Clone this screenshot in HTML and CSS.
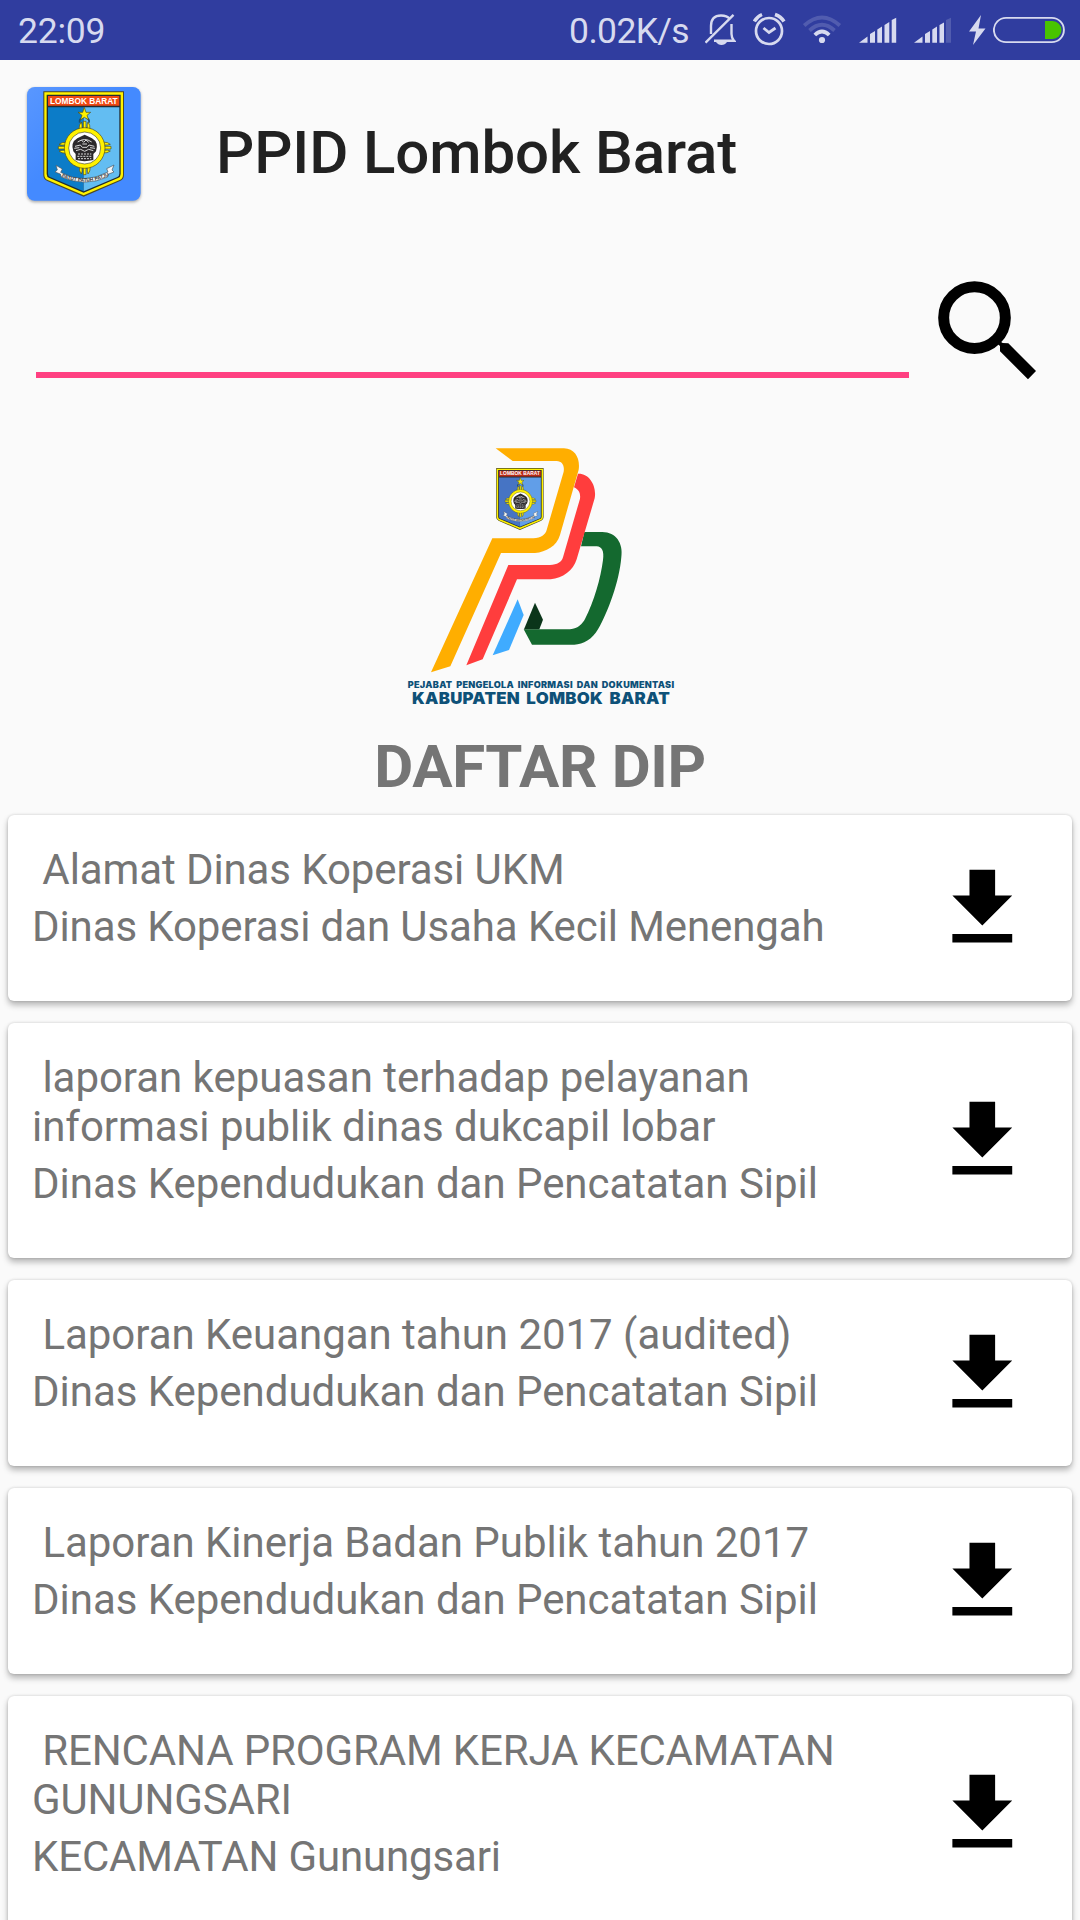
FILE: index.html
```html
<!DOCTYPE html>
<html lang="id">
<head>
<meta charset="utf-8">
<title>PPID Lombok Barat</title>
<link rel="stylesheet" href="styles.css">
</head>
<body>
<svg class="defs" width="0" height="0" aria-hidden="true">
  <symbol id="emblem" viewBox="70 32 243 320" overflow="visible">
    <path d="M70 34H312V285Q312 298 300 303L191 350L82 303Q70 298 70 285Z" fill="#4d4a22"/>
    <path d="M73 37H309V284Q309 296 299 300L191 346L83 300Q73 296 73 284Z" fill="#fff200"/>
    <path d="M80 44H302V282Q302 291 294 294L191 338L88 294Q80 291 80 282Z" fill="#222b30"/>
    <path class="emblem-dark" d="M84 82H191V334L90 291Q84 288 84 281Z"/>
    <path class="emblem-light" d="M191 82H298V281Q298 288 292 291L191 334Z"/>
    <path class="emblem-red" d="M84 48H298V77H84Z"/>
    <text class="emblem-name" x="90" y="71" textLength="203" lengthAdjust="spacingAndGlyphs">LOMBOK BARAT</text>
    <path d="M179 128Q177 116 187 114M207 128Q209 116 199 114" stroke="#174d78" stroke-width="5" fill="none"/>
    <g stroke="#4b481c" stroke-width="2" stroke-linejoin="round">
      <path d="M193 82L198 97H212L201 106L206 120L193 112L181 120L186 106L174 97H188Z" fill="#fff200"/>
      <g id="prongs" fill="#fff200">
        <path id="prong" d="M177 150Q177 132 184 126Q187 135 186 143H190V124H198V143H202Q200 135 204 126Q211 134 210 150L204 156H183Z"/>
        <use href="#prong" transform="rotate(90 194 203)"/>
        <use href="#prong" transform="rotate(180 194 204)"/>
        <use href="#prong" transform="rotate(-90 194 203)"/>
      </g>
      <circle cx="194" cy="204" r="61" fill="#fff200"/>
      <circle cx="194" cy="204" r="48" fill="#fff"/>
    </g>
    <path d="M160 214Q151 187 172 175L186 168L194 164L202 168L216 175Q237 187 228 214L220 222V240Q194 247 167 240V222Z" fill="#2b292b"/>
    <g fill="none" stroke="#d8d8d8" stroke-width="3">
      <path d="M173 186Q194 171 215 186M165 199L181 195L187 202H201L207 195L223 199M168 212L182 208L194 214L206 208L220 212M163 205L178 203M210 203L225 205"/>
      <path d="M174 222H214M172 229H216M174 236H214" stroke-dasharray="6 3"/>
      <path d="M184 180L191 187L198 180L206 187M187 192H201"/>
    </g>
    <path d="M108 256L127 267L122 277Q192 315 264 276L260 266L282 255L276 270L282 276L264 283L263 291Q194 322 124 291L121 282L105 276L112 270Z" fill="#f7f7f7" stroke="#4a555e" stroke-width="2"/>
    <path id="motto-line" d="M122 289Q194 322 266 287" fill="none"/>
    <text class="emblem-motto"><textPath href="#motto-line" startOffset="3">PATUT PATUH PATJU</textPath></text>
  </symbol>
  <symbol id="download" viewBox="0 0 24 24">
    <path d="M19 9h-4V3H9v6H5l7 7 7-7zM5 18v2h14v-2H5z"/>
  </symbol>
</svg>

<header class="status">
  <span class="clock">22:09</span>
  <span class="speed">0.02K/s</span>
  <div class="tray">
    <svg width="31" height="60" viewBox="705 0 31 60" fill="none" stroke="#d7daef" stroke-width="2.4">
      <path d="M711 34V26Q711 15.500 721 15.500Q727 15.500 730 19M731.500 24V34Q731.500 38 734 40.700H714"/>
      <path d="M705.500 42.700L733.500 14.800"/>
      <path d="M716 42H727Q725 45 721.500 45Q718 45 716 42Z" fill="#d7daef" stroke="none"/>
    </svg>
    <svg width="33" height="60" viewBox="753 0 33 60" fill="none" stroke="#d7daef" stroke-width="2.7">
      <circle cx="769" cy="31" r="13"/>
      <path d="M763.500 28L769 32.500L775.500 28" stroke-width="2.8"/>
      <path d="M754.300 21.500Q757 16.500 762 14.500M784 21.500Q781 16.500 775 14.500" stroke-width="3.5"/>
    </svg>
    <svg width="39" height="60" viewBox="803 0 39 60" fill="none" stroke="#d7daef" stroke-width="3.8">
      <circle cx="822" cy="40" r="3.100" fill="#d7daef" stroke="none"/>
      <path d="M814.800 35Q822 28 829.200 35"/>
      <path d="M809.500 30.500Q822 19 834.500 30.500M804.200 25.500Q822 9.500 839.800 25.500" opacity=".2"/>
    </svg>
    <svg width="38" height="60" viewBox="859 0 38 60" fill="#d7daef">
      <path d="M859 42.700L867.500 36.500V42.700ZM870 34L875 31V42.700H870ZM877.300 29.500L882 26.500V42.700H877.300ZM884.500 25L889.300 22V42.700H884.500ZM891.700 20L896.200 17.700V42.700H891.700Z"/>
    </svg>
    <svg width="38" height="60" viewBox="914 0 38 60" fill="#d7daef">
      <path d="M914 42.700L922.500 36.500V42.700ZM925 34L930 31V42.700H925ZM932.300 29.500L937 26.500V42.700H932.300ZM939.500 25L944 22.500V42.700H939.500Z"/>
      <path d="M946 20L951 17.700V42.700H946Z" opacity=".2"/>
    </svg>
    <svg width="17" height="60" viewBox="969 0 17 60" fill="#d7daef">
      <path d="M981 15L969 31.500H976L973 45L985.500 28.500H978.500Z"/>
    </svg>
    <svg class="battery" width="73" height="60" viewBox="993 0 73 60">
      <rect x="993.900" y="17.900" width="70" height="24.200" rx="12.100" fill="none" stroke="#d7daef" stroke-width="1.900"/>
      <path d="M1045 21H1052.500A9 9 0 0 1 1052.500 39H1045Z" fill="#48c400"/>
    </svg>
  </div>
</header>

<main class="page">
  <div class="brand">
    <svg class="app-icon" viewBox="0 0 390 390">
      <defs>
        <linearGradient id="tile" x1="0" y1="0" x2="1" y2="1">
          <stop offset="0" stop-color="#5997ff"/><stop offset=".45" stop-color="#448aff"/>
        </linearGradient>
      </defs>
      <rect class="tile" x="21" y="21" width="341" height="341" rx="23" fill="url(#tile)"/>
      <use href="#emblem" x="70" y="32" width="243" height="320"/>
    </svg>
    <h1 class="title">PPID Lombok Barat</h1>
  </div>

  <form class="search">
    <input class="query" type="text" aria-label="Cari">
    <svg class="search-icon" viewBox="165 50 315 315">
      <circle cx="283.500" cy="172" r="92.500" fill="none" stroke="#000" stroke-width="33"/>
      <path d="M354 252L362 244L368 248L385 249L468 332L444 357L360 273V257Z"/>
    </svg>
  </form>

  <svg class="logo" viewBox="0 0 840 870">
    <path d="M553 306H607C648 306 670 340 664 381C658 455 624 545 594 598C577 628 550 643 523 644H396L371 598H510C535 596 548 580 555 567C582 515 602 445 609 390C613 362 605 350 590 349H543Z" fill="#14692f"/>
    <path d="M405 518L429 569L418 598H372Z" fill="#0b351a"/>
    <path d="M534 131C568 129 591 168 584 205L530 388C520 421 488 445 452 448H351L248 688L199 706L325 405H450C472 404 485 397 489 382L540 206C542 190 537 179 522 172Z" fill="#ff3d3d"/>
    <path d="M287 55H492C526 56 541 87 536 119L480 315C470 349 438 366 405 369H303L151 709L93 727L277 325H400C424 324 436 314 440 300L491 125C494 105 486 94 470 93H338Z" fill="#ffae00"/>
    <path d="M353 508L371 555L327 660L278 676Z" fill="#3fabff"/>
    <use class="emblem-small" href="#emblem" x="288" y="113" width="144" height="188"/>
    <text class="logo-sub" x="23" y="774" textLength="800" lengthAdjust="spacingAndGlyphs">PEJABAT PENGELOLA INFORMASI DAN DOKUMENTASI</text>
    <text class="logo-main" x="36" y="821" textLength="774" lengthAdjust="spacingAndGlyphs">KABUPATEN LOMBOK BARAT</text>
  </svg>

  <h2 class="heading">DAFTAR DIP</h2>

  <section class="list">
    <article class="card">
      <div class="info tight">
        <p class="name"> Alamat Dinas Koperasi UKM</p>
        <p class="office">Dinas Koperasi dan Usaha Kecil Menengah</p>
      </div>
      <svg class="download"><use href="#download"/></svg>
    </article>
    <article class="card">
      <div class="info">
        <p class="name"> laporan kepuasan terhadap pelayanan informasi publik dinas dukcapil lobar</p>
        <p class="office">Dinas Kependudukan dan Pencatatan Sipil</p>
      </div>
      <svg class="download"><use href="#download"/></svg>
    </article>
    <article class="card">
      <div class="info">
        <p class="name"> Laporan Keuangan tahun 2017 (audited)</p>
        <p class="office">Dinas Kependudukan dan Pencatatan Sipil</p>
      </div>
      <svg class="download"><use href="#download"/></svg>
    </article>
    <article class="card">
      <div class="info">
        <p class="name"> Laporan Kinerja Badan Publik tahun 2017</p>
        <p class="office">Dinas Kependudukan dan Pencatatan Sipil</p>
      </div>
      <svg class="download"><use href="#download"/></svg>
    </article>
    <article class="card">
      <div class="info tighter">
        <p class="name"> RENCANA PROGRAM KERJA KECAMATAN GUNUNGSARI</p>
        <p class="office">KECAMATAN Gunungsari</p>
      </div>
      <svg class="download"><use href="#download"/></svg>
    </article>
  </section>
</main>
</body>
</html>
```

FILE: styles.css
```css
* { box-sizing: border-box; }

body {
  margin: 0;
  height: 1920px;
  overflow: hidden;
  background: #fafafa;
  color: #757575;
  font-family: Roboto, "Liberation Sans", sans-serif;
}

h1, h2, p { margin: 0; }
svg { display: block; flex: none; }
.defs { position: absolute; }

/* status bar */
.status {
  display: flex;
  align-items: center;
  height: 60px;
  padding: 0 14px 0 18px;
  background: #303d9f;
  color: #d7daef;
  font-size: 35.5px;
  line-height: 58px;
}
.clock, .speed { padding-top: 2px; }
.clock { letter-spacing: -.25px; }
.speed { margin-left: auto; padding-right: 16px; letter-spacing: -.65px; }
.tray { display: flex; gap: 17px; }
.battery { margin-left: -10px; }

/* title */
.brand { display: flex; height: 185px; padding: 20px 20px 0; }
.app-icon { width: 130px; height: 130px; overflow: visible; }
.tile { filter: drop-shadow(0 4px 4px rgba(0, 0, 0, .35)); }
.title {
  margin: 38px 0 0 66px;
  color: #212121;
  font-size: 60px;
  font-weight: 500;
  line-height: 70px;
  letter-spacing: -.12px;
}

.emblem-dark { fill: var(--shield-dark, #0c7cc8); }
.emblem-light { fill: var(--shield-light, #63bdf2); }
.emblem-red { fill: var(--shield-red, #f04812); }
.emblem-small {
  --shield-dark: #4674c4;
  --shield-light: #619ee8;
  --shield-red: #b92a16;
}
.emblem-name { fill: #fff; font: bold 26px "Liberation Sans", sans-serif; }
.emblem-motto { fill: #333; font: bold 14.5px "Liberation Sans", sans-serif; }

/* search */
.search { display: flex; height: 185px; padding: 0 36px; }
.query {
  width: 873px;
  height: 133px;
  padding: 0;
  border: 0;
  border-bottom: 6px solid #ff4081;
  outline: 0;
  background: transparent;
  font: 54px/70px Roboto, sans-serif;
}
.search-icon { width: 105px; height: 105px; margin: 31.700px 0 0 26px; }

/* logo */
.logo { width: 280px; height: 290px; margin: 0 auto; }
.logo-sub, .logo-main { fill: #0e5178; font-family: Inter, "Liberation Sans", sans-serif; font-weight: 900; }
.logo-sub { font-size: 26px; letter-spacing: .8px; word-spacing: 5px; }
.logo-main { font-size: 49px; letter-spacing: .8px; word-spacing: 8px; }

.heading {
  padding: 12px 0 13px;
  font-size: 60px;
  font-weight: 700;
  line-height: 70px;
  letter-spacing: -.35px;
  text-align: center;
}

/* document list */
.list { display: grid; gap: 22px; padding: 0 8px; }
.card {
  display: flex;
  align-items: center;
  justify-content: space-between;
  padding: 30px 38px 50px 24px;
  border-radius: 6px;
  background: #fff;
  box-shadow: 0 4px 6px rgba(0, 0, 0, .28), 0 0 3px rgba(0, 0, 0, .16);
}
.info {
  display: grid;
  gap: 8px;
  width: 850px;
  font-size: 42px;
  line-height: 49px;
  letter-spacing: -.03px;
}
.info.tight { letter-spacing: -.1px; }
.info.tighter { letter-spacing: -.15px; }
.name { white-space: pre-wrap; }
.download { width: 102.600px; height: 102.600px; margin: -20px 0 -40px; fill: #000; }
```
